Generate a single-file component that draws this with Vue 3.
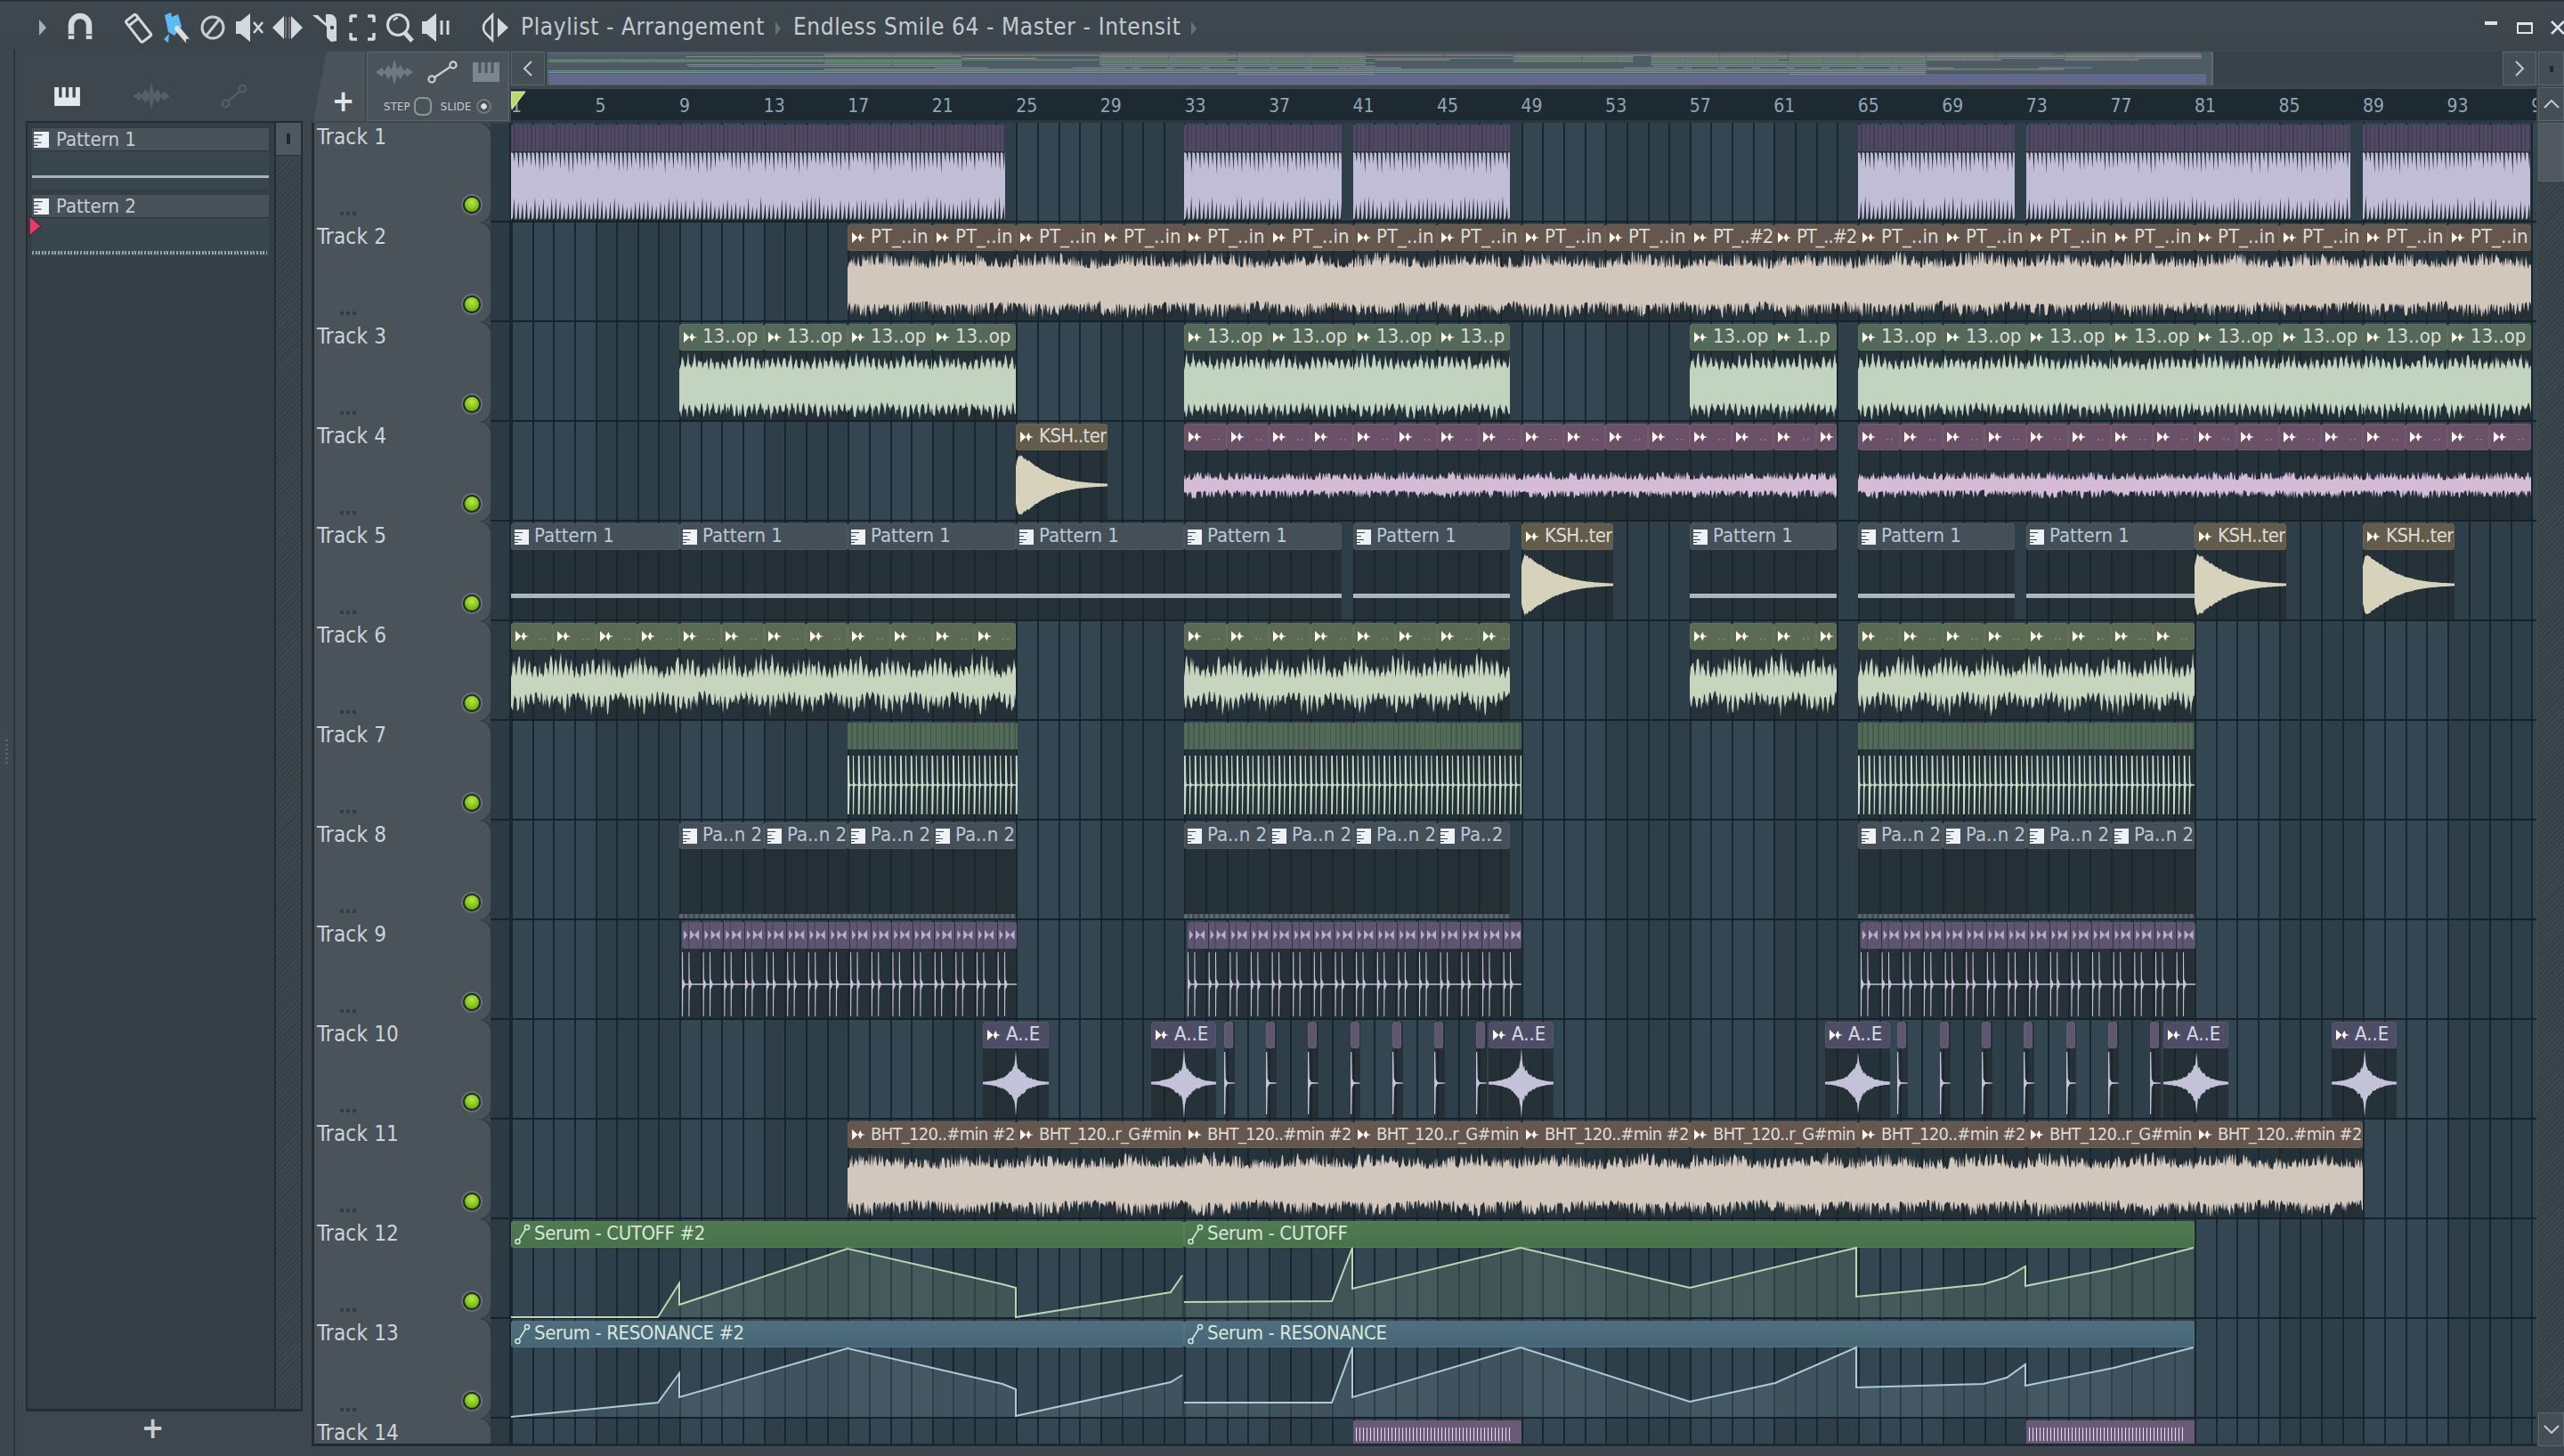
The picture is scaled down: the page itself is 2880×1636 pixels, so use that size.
<script setup>
const BAR = 23.64
const bx = (n) => (n - 1) * BAR

function rng(seed) {
  let s = seed
  return () => {
    s = (s * 16807) % 2147483647
    return s / 2147483647
  }
}

// Wave builders: coordinates are relative to the track row (112 high)
function edgePath(top, bottom) {
  const up = top.map((p) => `${p[0].toFixed(1)} ${p[1].toFixed(1)}`)
  const down = bottom.reverse().map((p) => `${p[0].toFixed(1)} ${p[1].toFixed(1)}`)
  return `M${up.join('L')}L${down.join('L')}Z`
}

function noiseWave(w, seed, c, base, spike, wobble, period, depth) {
  const r = rng(seed)
  const top = []
  const bottom = []
  const sample = (x) => {
    const env = 1 - depth + depth * Math.sin(x / wobble)
    const shape = period ? Math.abs(Math.sin(x / period)) * (0.3 + 0.7 * r()) : Math.pow(r(), 1.6)
    return env * (base + (spike - base) * shape)
  }
  for (let x = 0; x <= w; x += 1) {
    top.push([x, c - sample(x)])
    bottom.push([x, c + sample(x + 1.5)])
  }
  return edgePath(top, bottom)
}

function combWave(w, seed) {
  const r = rng(seed)
  const p = 4.7
  const top = []
  const bottom = []
  for (let x = 0; x < w; x += p) {
    top.push([x, 33], [x + p * 0.55, 34], [x + p * 0.85, 44 + r() * 14])
    bottom.push([x, 109], [x + p * 0.4, 107], [x + p * 0.75, 82 + r() * 12])
  }
  top.push([w, 36])
  bottom.push([w, 106])
  return edgePath(top, bottom)
}

function decayWave(w, seed) {
  const r = rng(seed)
  const top = []
  const bottom = []
  for (let x = 0; x <= w; x += 1) {
    const rise = Math.min(1, 0.6 + x / 8)
    const a = 35 * rise * Math.exp(-Math.pow(x / 36, 1.3)) * (0.95 + r() * 0.1) + 0.8
    top.push([x, 71 - a])
    bottom.push([x, 71 + a])
  }
  return edgePath(top, bottom)
}

function starWave(w, seed) {
  const r = rng(seed)
  const mid = 37
  const top = []
  const bottom = []
  for (let x = 0; x <= w; x += 1) {
    const d = Math.abs(x - mid)
    const a = 15 * Math.exp(-d / 0.8) + 22 * Math.exp(-d / 11) * (0.78 + r() * 0.36) + 0.7
    top.push([x, 71 - a])
    bottom.push([x, 71 + a])
  }
  return edgePath(top, bottom)
}

function spikeWave(w) {
  return `M0 36L1.2 36L1.8 66L4 70L${w} 70.4L${w} 71.6L4 72L1.8 76L1.2 106L0 106Z`
}

function pulseWave(w, period, c) {
  let d = `M0 ${c - 0.7}H${w}V${c + 0.7}H0Z`
  for (let x = 0, i = 0; x < w - 1; x += period, i++) {
    const t = i % 2 ? 1.1 : 1.8
    d += `M${x.toFixed(1)} ${c - 33}L${(x + t).toFixed(1)} ${c - 33}L${(x + t + 0.6).toFixed(1)} ${c - 3}L${(x + 3.4).toFixed(1)} ${c}L${(x + t + 0.6).toFixed(1)} ${c + 3}L${(x + t).toFixed(1)} ${c + 33}L${x.toFixed(1)} ${c + 33}Z`
  }
  return d
}

function pairWave(w) {
  let d = 'M0 71.3H' + w + 'V72.7H0Z'
  for (let x = 0; x < w - 1; x += BAR) {
    for (const off of [0, 7.4]) {
      const o = x + off
      d += `M${o.toFixed(1)} 36L${(o + 1).toFixed(1)} 36L${(o + 1.3).toFixed(1)} 66L${(o + 4).toFixed(1)} 72L${(o + 1.3).toFixed(1)} 78L${(o + 1).toFixed(1)} 108L${o.toFixed(1)} 108Z`
    }
  }
  return d
}

function pairMarks(w) {
  let d = ''
  for (let x = 0; x < w - 4; x += BAR) {
    const o = x.toFixed(1)
    d += `M${+o + 3} 10V21L${+o + 7} 15.5ZM${+o + 10} 10L${+o + 15} 15.5L${+o + 10} 21ZM${+o + 15} 15.5L${+o + 20} 10V21Z`
  }
  return d
}

const waveMakers = {
  comb: combWave,
  tan: (w, s) => noiseWave(w, s, 70, 21, 38, 22, 0, 0.08),
  green: (w, s) => noiseWave(w, s, 72, 19, 39, 9, 2.1, 0.05),
  thin: (w, s) => noiseWave(w, s, 71, 6, 16, 14, 0, 0.08),
  olive: (w, s) => noiseWave(w, s, 71, 9, 38, 6, 1.9, 0.18),
  beige: (w, s) => noiseWave(w, s, 73, 20, 37, 18, 0, 0.08),
  decay: decayWave,
  star: starWave,
  spike: spikeWave,
  pulse: (w) => pulseWave(w, 5.9, 72),
  pair: pairWave
}

let seedCounter = 11
function clip(start, end, kind, opts = {}) {
  const left = Math.round(bx(start))
  const width = Math.round(bx(end)) - left
  const wave = opts.wave ? waveMakers[opts.wave](width, (seedCounter += 97)) : ''
  return { start, end, kind, left, width, wave, label: opts.label || '', icon: opts.icon || '', dim: !!opts.dim, tight: !!opts.tight, marks: opts.wave === 'pair' ? pairMarks(width) : '' }
}

function series(from, to, step, make) {
  const out = []
  for (let b = from; b < to; b += step) out.push(make(b, Math.min(b + step, to)))
  return out
}

const ptClip = (b, e) => (b === 57 || b === 61
  ? clip(b, e, 'tan', { wave: 'tan', icon: 'audio', label: 'PT_..#2', tight: true })
  : clip(b, e, 'tan', { wave: 'tan', icon: 'audio', label: 'PT_..in' }))
const greenClip = (b, e, label = '13..op') => clip(b, e, 'green', { wave: 'green', icon: 'audio', label })
const pinkClip = (b, e) => clip(b, e, 'pink', { wave: 'thin', icon: 'audio', label: '..', dim: true })
const oliveClip = (b, e) => clip(b, e, 'olive', { wave: 'olive', icon: 'audio', label: '..', dim: true })
const kshClip = (b) => clip(b, b + 4.36, 'ksh', { wave: 'decay', icon: 'audio', label: 'KSH..ter' })
const pat1 = (b, e) => clip(b, e, 'pattern', { icon: 'pattern', label: 'Pattern 1' })
const pat2 = (b, e = b + 4, label = 'Pa..n 2') => clip(b, e, 'pattern pattern-two', { icon: 'pattern', label })
const dkGreen = (b, e) => clip(b, e, 'dkgreen', { wave: 'pulse' })
const kick = (b, e) => clip(b, e, 'lav', { wave: 'comb' })
const hat = (b, e) => clip(b, e, 'pair', { wave: 'pair' })
const aeClip = (b) => clip(b, b + 3.1, 'ae', { wave: 'star', icon: 'audio', label: 'A..E' })
const aeRun = (from) => series(0, 7, 1, (i) => clip(from + i * 2, from + i * 2 + 0.5, 'ae-small', { wave: 'spike' }))
const bhtLabels = ['BHT_120..#min #2', 'BHT_120..r_G#min']

const tracks = [
  { name: 'Track 1', clips: [kick(1, 24.46), kick(33, 40.46), kick(41, 48.46), kick(65, 72.46), kick(73, 88.4), kick(89, 96.94)] },
  { name: 'Track 2', clips: series(17, 97, 4, ptClip) },
  {
    name: 'Track 3',
    clips: [
      ...series(9, 25, 4, (b, e) => greenClip(b, e)),
      ...series(33, 45, 4, (b, e) => greenClip(b, e)),
      greenClip(45, 48.46, '13..p'),
      greenClip(57, 61),
      greenClip(61, 64, '1..p'),
      ...series(65, 97, 4, (b, e) => greenClip(b, e))
    ]
  },
  { name: 'Track 4', clips: [kshClip(25), ...series(33, 64, 2, pinkClip), ...series(65, 97, 2, pinkClip)] },
  {
    name: 'Track 5',
    clips: [pat1(1, 9), pat1(9, 17), pat1(17, 25), pat1(25, 33), pat1(33, 40.46), pat1(41, 48.46), kshClip(49), pat1(57, 64), pat1(65, 72.46), pat1(73, 81), kshClip(81), kshClip(89)]
  },
  { name: 'Track 6', clips: [...series(1, 25, 2, oliveClip), ...series(33, 48.46, 2, oliveClip), ...series(57, 64, 2, oliveClip), ...series(65, 81, 2, oliveClip)] },
  { name: 'Track 7', clips: [dkGreen(17, 25.05), dkGreen(33, 49), dkGreen(65, 81)] },
  {
    name: 'Track 8',
    clips: [pat2(9), pat2(13), pat2(17), pat2(21), pat2(33), pat2(37), pat2(41), pat2(45, 48.46, 'Pa..2'), pat2(65), pat2(69), pat2(73), pat2(77)]
  },
  { name: 'Track 9', clips: [hat(9.13, 25.03), hat(33.13, 49.03), hat(65.13, 81.03)] },
  { name: 'Track 10', clips: [aeClip(23.43), aeClip(31.41), ...aeRun(34.87), aeClip(47.43), aeClip(63.42), ...aeRun(66.88), aeClip(79.5), aeClip(87.5)] },
  { name: 'Track 11', clips: series(17, 89, 8, (b, e) => clip(b, e, 'tan beige', { wave: 'beige', icon: 'audio', label: bhtLabels[((b - 17) / 8) % 2] })) },
  {
    name: 'Track 12',
    clips: [clip(1, 33, 'auto-green', { icon: 'auto', label: 'Serum - CUTOFF #2' }), clip(33, 81, 'auto-green', { icon: 'auto', label: 'Serum - CUTOFF' })],
    curve: { tone: 'curve-green', parts: [
      [[0, 110], [165, 110], [189, 72], [189, 96], [378, 33], [552, 73], [567, 77], [567, 110], [741, 82], [754, 63]],
      [[756, 93], [922, 92], [945, 32], [945, 78], [1134, 32], [1324, 77], [1511, 32], [1511, 87], [1654, 73], [1680, 65], [1701, 53], [1701, 75], [1800, 55], [1890, 32]]
    ] }
  },
  {
    name: 'Track 13',
    clips: [clip(1, 33, 'auto-blue', { icon: 'auto', label: 'Serum - RESONANCE #2' }), clip(33, 81, 'auto-blue', { icon: 'auto', label: 'Serum - RESONANCE' })],
    curve: { tone: 'curve-blue', parts: [
      [[0, 110], [165, 94], [189, 61], [189, 88], [378, 33], [552, 73], [567, 79], [567, 109], [741, 71], [754, 63]],
      [[756, 94], [922, 94], [945, 32], [945, 88], [1134, 32], [1324, 93], [1420, 72], [1511, 32], [1511, 77], [1654, 73], [1680, 66], [1701, 51], [1701, 75], [1800, 55], [1890, 32]]
    ] }
  },
  { name: 'Track 14', clips: [clip(41, 49, 'purple-run'), clip(73, 81, 'purple-run')] }
]

function curveLine(points) {
  return 'M' + points.map((p) => p.join(' ')).join('L')
}
function curveFill(points) {
  const first = points[0]
  const last = points[points.length - 1]
  return `M${first[0]} 110L` + points.map((p) => p.join(' ')).join('L') + `L${last[0]} 110Z`
}

const rulerMarks = []
for (let n = 1; n <= 97; n += 4) rulerMarks.push(n)

const overviewColors = {
  lav: '#6f6a8c',
  tan: '#ab9580',
  green: '#86ad88',
  pink: '#9a7c9c',
  ksh: '#a8a078',
  pattern: '#7d9a88',
  olive: '#7fa878',
  dkgreen: '#6ea070',
  pair: '#8f86b4',
  ae: '#8f8ab0',
  'ae-small': '#8f8ab0',
  'auto-green': '#72b088',
  'auto-blue': '#7aa4b4',
  'purple-run': '#9a84ac'
}
const overviewBars = []
tracks.forEach((track, i) => {
  track.clips.forEach((c) => {
    const key = c.kind.split(' ')[0]
    overviewBars.push({
      x: 2 + (c.start - 1) * 19.35,
      w: (c.end - c.start) * 19.35 - 0.6,
      y: 1.6 + i * 1.78,
      fill: overviewColors[key] || '#889'
    })
  })
})
const overviewStripes = [25.5, 27.5, 29.5, 31.5, 33.5, 35.5]
</script>

<template>
  <div class="app">
    <header class="topbar">
      <svg class="tool tool-play" viewBox="0 0 42 42"><path d="M17 12L25 21L17 30Z" fill="#a6afb5" /></svg>
      <svg class="tool" viewBox="0 0 42 42">
        <path d="M11 34V18a10 10 0 0 1 20 0V34" fill="none" stroke="#d4d9dd" stroke-width="6.5" />
        <path d="M8 29h6M28 29h6" stroke="#3e474e" stroke-width="1.5" />
      </svg>
      <svg class="tool tool-gap" viewBox="0 0 42 42">
        <g transform="rotate(-38 21 21)" fill="none" stroke="#d4d9dd" stroke-width="3">
          <rect x="14" y="7" width="14" height="30" rx="2" />
          <path d="M14 13H28" />
        </g>
      </svg>
      <svg class="tool" viewBox="0 0 42 42">
        <path d="M9 7L16 4L17 9L24 6L28 20L20 30L13 26Z" fill="#5cbcf2" />
        <path d="M23 22L34 35" stroke="#d8dde0" stroke-width="6" stroke-linecap="round" />
        <circle cx="35" cy="36" r="2.4" fill="#3e474e" />
        <path d="M8 34L14 28L13 38Z" fill="#5cbcf2" />
      </svg>
      <svg class="tool" viewBox="0 0 42 42">
        <circle cx="21" cy="21" r="12" fill="none" stroke="#c9ced2" stroke-width="3" />
        <path d="M13 31L29 11" stroke="#c9ced2" stroke-width="3" />
      </svg>
      <svg class="tool" viewBox="0 0 42 42">
        <path d="M5 14H10L21 5V37L10 28H5Z" fill="#d4d9dd" />
        <path d="M25 15L35 27M35 15L25 27" stroke="#d4d9dd" stroke-width="2.6" />
      </svg>
      <svg class="tool" viewBox="0 0 42 42">
        <path d="M4 21L17 8V34Z" fill="#d4d9dd" />
        <path d="M38 21L25 8V34Z" fill="#d4d9dd" />
        <path d="M19 9V33M23 9V33" stroke="#8a7f86" stroke-width="1.4" />
      </svg>
      <svg class="tool" viewBox="0 0 42 42">
        <path d="M7 7L13 7L22 16V6H28Q34 8 34 15V36L28 37L23 32V20Z" fill="#d4d9dd" />
        <circle cx="29" cy="21" r="2.2" fill="#3e474e" />
      </svg>
      <svg class="tool" viewBox="0 0 42 42">
        <path d="M15 8H9Q8 8 8 9V15M27 8H33Q34 8 34 9V15M15 34H9Q8 34 8 33V27M27 34H33Q34 34 34 33V27" fill="none" stroke="#d4d9dd" stroke-width="3.4" />
      </svg>
      <svg class="tool" viewBox="0 0 42 42">
        <circle cx="19" cy="18" r="11.5" fill="none" stroke="#d4d9dd" stroke-width="3" />
        <path d="M14 13Q16 10 19 10" fill="none" stroke="#d4d9dd" stroke-width="2" />
        <path d="M27 27L35 36" stroke="#d4d9dd" stroke-width="5" />
      </svg>
      <svg class="tool" viewBox="0 0 42 42">
        <path d="M4 14H9L20 5V37L9 28H4Z" fill="#d4d9dd" />
        <path d="M26 13V29M33 13V29" stroke="#d4d9dd" stroke-width="3" />
      </svg>
      <svg class="tool tool-gap" viewBox="0 0 42 42">
        <path d="M18 7V35L10 27Q6 21 10 15Z" fill="none" stroke="#d4d9dd" stroke-width="2.6" />
        <path d="M24 10L36 21L24 32Z" fill="#d4d9dd" />
      </svg>
      <span class="title">Playlist - Arrangement</span>
      <span class="title-sep"></span>
      <span class="title">Endless Smile 64 - Master - Intensit</span>
      <span class="title-sep"></span>
      <div class="win-buttons">
        <span class="win-min"></span>
        <span class="win-max"></span>
        <svg class="win-close" viewBox="0 0 16 16"><path d="M1 1L15 15M15 1L1 15" stroke="#dfe3e6" stroke-width="2.6" /></svg>
      </div>
    </header>

    <div class="main">
      <aside class="dock"><span class="dock-grip"></span></aside>

      <section class="picker">
        <div class="picker-tabs">
          <svg class="tab-icon" viewBox="0 0 32 24">
            <path d="M1 1H31V23H1Z" fill="#e3e8ec" />
            <path d="M8 1V13M16 1V13M24 1V13" stroke="#3f484f" stroke-width="3.6" />
          </svg>
          <svg class="tab-icon tab-wave" viewBox="0 0 42 30">
            <path d="M0 15L7 10L10 14L14 7L18 12L21 0L24 12L28 7L32 14L35 10L42 15L35 20L32 16L28 23L24 18L21 30L18 18L14 23L10 16L7 20Z" fill="#565f66" />
          </svg>
          <svg class="tab-icon tab-auto" viewBox="0 0 32 30">
            <circle cx="6" cy="24" r="4" fill="none" stroke="#565f66" stroke-width="2.4" />
            <circle cx="26" cy="6" r="4" fill="none" stroke="#565f66" stroke-width="2.4" />
            <path d="M9 21L23 9" stroke="#565f66" stroke-width="2.4" />
          </svg>
        </div>
        <div class="picker-list">
          <div class="picker-rows">
            <div class="pat">
              <div class="pat-head">
                <svg class="pat-icon" viewBox="0 0 16 17"><path d="M0 0H16V17H0Z" fill="#eef2f5" /><path d="M0 3.5H9M0 7.5H5M0 11.5H8M0 14.5H4" stroke="#3d4850" stroke-width="1.2" /></svg>
                <span>Pattern 1</span>
              </div>
              <div class="pat-body"><i class="pat-solid"></i></div>
            </div>
            <div class="pat">
              <div class="pat-head">
                <svg class="pat-icon" viewBox="0 0 16 17"><path d="M0 0H16V17H0Z" fill="#eef2f5" /><path d="M0 3.5H9M0 7.5H5M0 11.5H8M0 14.5H4" stroke="#3d4850" stroke-width="1.2" /></svg>
                <span>Pattern 2</span>
              </div>
              <div class="pat-body"><i class="pat-dotted"></i></div>
              <svg class="pat-marker" viewBox="0 0 15 24"><path d="M1 1L14 12L1 23Z" fill="#e8395f" stroke="#1d262c" stroke-width="1" /></svg>
            </div>
          </div>
          <div class="picker-scroll"><span class="picker-scroll-btn"><i></i></span></div>
        </div>
        <div class="picker-add">+</div>
      </section>

      <section class="playlist">
        <div class="pl-head">
          <div class="add-tab">+</div>
          <div class="snap">
            <div class="snap-icons">
              <svg class="snap-wave" viewBox="0 0 42 30">
                <path d="M0 15L7 10L10 14L14 7L18 12L21 0L24 12L28 7L32 14L35 10L42 15L35 20L32 16L28 23L24 18L21 30L18 18L14 23L10 16L7 20Z" fill="#6f797f" />
              </svg>
              <svg class="snap-auto" viewBox="0 0 34 26">
                <circle cx="5" cy="21" r="3.6" fill="none" stroke="#c9cfd4" stroke-width="2.2" />
                <circle cx="29" cy="5" r="3.6" fill="none" stroke="#c9cfd4" stroke-width="2.2" />
                <path d="M8 19L26 7" stroke="#c9cfd4" stroke-width="2.2" />
              </svg>
              <svg class="snap-piano" viewBox="0 0 30 22">
                <path d="M0 0H30V22H0Z" fill="#7c868c" />
                <path d="M8 0V12M15 0V12M22 0V12" stroke="#4b555c" stroke-width="3" />
              </svg>
            </div>
            <div class="snap-row">
              <span>STEP</span><i class="snap-toggle"></i>
              <span class="snap-slide">SLIDE</span><i class="snap-radio"></i>
            </div>
          </div>
          <div class="nav">
            <div class="overview-row">
              <button class="nav-btn">
                <svg viewBox="0 0 12 20" width="12" height="20"><path d="M10 2L2 10L10 18" fill="none" stroke="#c3cad0" stroke-width="2" /></svg>
              </button>
              <div class="overview-track">
                <svg class="overview" viewBox="0 0 1870 38" preserveAspectRatio="none">
                  <rect width="1870" height="38" fill="#4c5d65" />
                  <rect v-for="y in overviewStripes" :key="y" x="2" :y="y" width="1862" height="1.2" :fill="y > 30 ? '#7a6f9e' : '#6d74a8'" />
                  <rect v-for="(b, i) in overviewBars" :key="i" :x="b.x" :y="b.y" :width="b.w" height="1.1" :fill="b.fill" opacity="0.8" />
                </svg>
              </div>
              <button class="nav-btn nav-btn-right">
                <svg viewBox="0 0 12 20" width="12" height="20"><path d="M2 2L10 10L2 18" fill="none" stroke="#c3cad0" stroke-width="2" /></svg>
              </button>
            </div>
            <div class="ruler">
              <span v-for="n in rulerMarks" :key="n" class="ruler-mark">{{ n }}</span>
              <svg class="ruler-play" viewBox="0 0 18 22"><path d="M0 1H17L1 22Z" fill="#b9d96a" stroke="#e9f3c4" stroke-width="1" /></svg>
            </div>
          </div>
          <div class="vscroll-top">
            <span class="vs-btn"><i></i></span>
            <span class="vs-btn vs-up">
              <svg viewBox="0 0 18 10" width="18" height="10"><path d="M1 9L9 1L17 9" fill="none" stroke="#c3cad0" stroke-width="2" /></svg>
            </span>
          </div>
        </div>

        <div class="pl-body">
          <div class="rows">
            <div v-for="track in tracks" :key="track.name" class="row">
              <div class="row-head">
                <span class="row-name">{{ track.name }}</span>
                <span class="row-dots"><i></i><i></i><i></i></span>
                <span class="row-led"></span>
              </div>
              <div class="row-strip"></div>
              <div class="lane">
                <div
                  v-for="(c, i) in track.clips"
                  :key="i"
                  class="clip"
                  :class="c.kind"
                  :style="{ left: c.left + 'px', width: c.width + 'px' }"
                >
                  <div class="clip-head">
                    <svg v-if="c.icon === 'audio'" class="clip-icon" viewBox="0 0 15 12">
                      <path d="M0 0L6.5 6L0 12ZM6.5 6L9.5 1L11 5L15 6L11 7L9.5 11Z" />
                    </svg>
                    <svg v-else-if="c.icon === 'pattern'" class="clip-icon-pat" viewBox="0 0 16 17">
                      <path d="M0 0H16V17H0Z" fill="#eef2f5" />
                      <path d="M0 3.5H9M0 7.5H5M0 11.5H8M0 14.5H4" stroke="#3d4850" stroke-width="1.2" />
                    </svg>
                    <svg v-else-if="c.icon === 'auto'" class="clip-icon-auto" viewBox="0 0 18 24">
                      <circle cx="3.5" cy="20" r="2.6" fill="none" stroke="#dbe8e0" stroke-width="1.5" />
                      <circle cx="14" cy="4" r="2.6" fill="none" stroke="#dbe8e0" stroke-width="1.5" />
                      <path d="M5 18L12.5 6" stroke="#dbe8e0" stroke-width="1.5" />
                    </svg>
                    <span v-if="c.label" class="clip-label" :class="{ 'clip-label-dim': c.dim, 'clip-label-tight': c.tight }">{{ c.label }}</span>
                    <i v-if="c.kind === 'purple-run'" class="clip-ticks"></i>
                    <svg v-if="c.marks" class="clip-marks" :viewBox="`0 0 ${c.width} 30`" :width="c.width" height="30">
                      <path :d="c.marks" />
                    </svg>
                  </div>
                  <svg v-if="c.wave" class="clip-wave" :viewBox="`0 0 ${c.width} 112`" :width="c.width" height="112">
                    <path :d="c.wave" />
                  </svg>
                  <i v-if="c.kind === 'pattern'" class="note-line"></i>
                  <i v-if="c.kind === 'pattern pattern-two'" class="dot-line"></i>
                </div>

                <svg v-if="track.curve" class="curve" :class="track.curve.tone" viewBox="0 0 2275 112" width="2275" height="112">
                  <g v-for="(part, i) in track.curve.parts" :key="i">
                    <path class="curve-fill" :d="curveFill(part)" />
                    <path class="curve-line" :d="curveLine(part)" />
                  </g>
                </svg>
              </div>
            </div>
          </div>
          <div class="vscroll">
            <span class="vs-thumb"></span>
            <span class="vs-hatch"></span>
            <span class="vs-btn vs-down">
              <svg viewBox="0 0 18 10" width="18" height="10"><path d="M1 1L9 9L17 1" fill="none" stroke="#c3cad0" stroke-width="2" /></svg>
            </span>
          </div>
        </div>
      </section>
    </div>
  </div>
</template>

<style>
html,
body {
  margin: 0;
  background: #3e474e;
}
</style>

<style scoped>
.app {
  width: 2880px;
  height: 1636px;
  display: flex;
  flex-direction: column;
  overflow: hidden;
  background: #3e474e;
  color: #c8d0d6;
  font-family: "DejaVu Sans Condensed", "DejaVu Sans", sans-serif;
  font-stretch: condensed;
}

.topbar {
  height: 56px;
  flex: none;
  box-sizing: border-box;
  padding: 4px 0 0 27px;
  display: flex;
  align-items: center;
  border-top: 2px solid #2b343a;
  background: linear-gradient(#3f484f, #3c454c);
}
.tool {
  width: 42px;
  height: 42px;
  flex: none;
}
.tool-gap {
  margin-left: 23px;
}
.title {
  font-size: 26px;
  line-height: 38px;
  color: #c3cbd1;
  white-space: nowrap;
  margin: -2px 0 0 8px;
  letter-spacing: 0.6px;
}
.title-sep {
  width: 0;
  height: 0;
  margin: 2px 14px 0 12px;
  border-left: 6px solid #667078;
  border-top: 8px solid transparent;
  border-bottom: 8px solid transparent;
}
.title-sep + .title {
  margin-left: 0;
}
.win-buttons {
  margin-left: auto;
  display: flex;
  align-items: center;
  height: 42px;
  margin-right: -1px;
}
.win-min {
  width: 14px;
  height: 4px;
  background: #dfe3e6;
  margin: -10px 22px 0 0;
}
.win-max {
  width: 18px;
  height: 13px;
  border: 2px solid #dfe3e6;
  border-top-width: 3px;
  box-sizing: border-box;
  margin-right: 20px;
}
.win-close {
  width: 16px;
  height: 16px;
  flex: none;
}

.main {
  flex: 1;
  min-height: 0;
  display: flex;
}

.dock {
  width: 15px;
  flex: none;
  border-right: 2px solid #2c353c;
  display: flex;
  align-items: center;
}
.dock-grip {
  width: 3px;
  height: 30px;
  margin-left: 6px;
  background: repeating-linear-gradient(#5a636a 0 2px, transparent 2px 5px);
}

.picker {
  width: 333px;
  flex: none;
  display: flex;
  flex-direction: column;
}
.picker-tabs {
  height: 80px;
  flex: none;
  display: flex;
  align-items: center;
  box-sizing: border-box;
  padding: 24px 0 0 43px;
}
.tab-icon {
  width: 31px;
  height: 23px;
  flex: none;
}
.tab-wave {
  width: 42px;
  height: 30px;
  margin-left: 58px;
}
.tab-auto {
  width: 32px;
  height: 28px;
  margin-left: 56px;
}
.picker-list {
  flex: 1;
  min-height: 0;
  margin: 0 10px 0 12px;
  display: flex;
  background: #333e46;
  border: 2px solid #222c33;
  border-bottom-width: 3px;
}
.picker-rows {
  flex: 1;
  min-width: 0;
  padding: 6px 6px 0 5px;
  border-right: 2px solid #222c33;
}
.pat {
  position: relative;
  margin-bottom: 6px;
}
.pat-head {
  height: 25px;
  display: flex;
  align-items: center;
  gap: 8px;
  padding-left: 2px;
  background: #4a5259;
  font-size: 22px;
  color: #c4cdd4;
  border-bottom: 1px solid #2b353c;
}
.pat-icon {
  width: 17px;
  height: 18px;
  flex: none;
}
.pat-body {
  height: 43px;
  background: #3a464e;
  position: relative;
}
.pat-solid {
  position: absolute;
  left: 0;
  right: 0;
  top: 27px;
  height: 3px;
  background: #a9b4ba;
}
.pat-dotted {
  position: absolute;
  left: 0;
  right: 2px;
  top: 37px;
  height: 4px;
  background: repeating-linear-gradient(90deg, #98a3a9 0 2px, transparent 2px 3.6px);
}
.pat-marker {
  position: absolute;
  left: -4px;
  top: 23px;
  width: 15px;
  height: 24px;
}
.picker-scroll {
  width: 28px;
  flex: none;
  background: repeating-linear-gradient(135deg, #3d474e 0 2px, #353f46 2px 4px);
}
.picker-scroll-btn {
  display: flex;
  align-items: center;
  justify-content: center;
  height: 36px;
  background: #4f585f;
  border-bottom: 1px solid #2b353c;
}
.picker-scroll-btn i {
  width: 4px;
  height: 12px;
  background: #1e282e;
}
.picker-add {
  height: 50px;
  flex: none;
  display: flex;
  align-items: center;
  justify-content: center;
  font-size: 34px;
  font-weight: 700;
  color: #c8cdd1;
  padding: 0 24px 14px 0;
  box-sizing: border-box;
}

.playlist {
  flex: 1;
  min-width: 0;
  display: flex;
  flex-direction: column;
  padding-bottom: 11px;
}
.pl-head {
  height: 82px;
  flex: none;
  display: flex;
  padding-left: 3px;
}
.add-tab {
  width: 57px;
  flex: none;
  height: 78px;
  margin-top: 2px;
  background: #4a535a;
  clip-path: polygon(24% 0, 100% 0, 100% 100%, 0 100%, 0 92%);
  border-radius: 8px 0 0 0;
  display: flex;
  align-items: flex-end;
  justify-content: center;
  font-size: 34px;
  font-weight: 700;
  line-height: 46px;
  color: #e0e4e7;
  box-sizing: border-box;
  padding-left: 8px;
}
.snap {
  width: 160px;
  height: 78px;
  flex: none;
  margin: 2px 2px 0 2px;
  box-sizing: border-box;
  background: #4a535a;
  border: 1px solid #5b656c;
  display: flex;
  flex-direction: column;
}
.snap-icons {
  height: 44px;
  display: flex;
  align-items: center;
  padding-left: 9px;
}
.snap-wave {
  width: 42px;
  height: 30px;
  flex: none;
}
.snap-auto {
  width: 34px;
  height: 26px;
  flex: none;
  margin-left: 16px;
}
.snap-piano {
  width: 30px;
  height: 22px;
  flex: none;
  margin-left: 17px;
}
.snap-row {
  flex: 1;
  display: flex;
  align-items: center;
  padding-left: 18px;
  font-size: 13px;
  color: #c4cbd0;
  letter-spacing: 0.2px;
  line-height: 1;
}
.snap-toggle {
  width: 20px;
  height: 21px;
  margin-left: 4px;
  border: 2px solid #8c959b;
  border-radius: 7px;
  box-sizing: border-box;
}
.snap-slide {
  margin-left: 10px;
}
.snap-radio {
  width: 17px;
  height: 17px;
  margin-left: 5px;
  box-sizing: border-box;
  border-radius: 50%;
  border: 2px solid #6f797f;
  background: radial-gradient(circle, #d8dde0 0 3px, transparent 3.5px);
}
.nav {
  flex: 1;
  min-width: 0;
  display: flex;
  flex-direction: column;
}
.overview-row {
  height: 38px;
  margin-top: 2px;
  display: flex;
  background: #384249;
}
.nav-btn {
  width: 38px;
  flex: none;
  padding: 0;
  background: #454e55;
  border: 1px solid #5b656c;
  display: flex;
  align-items: center;
  justify-content: center;
}
.overview-track {
  flex: 1;
  min-width: 0;
  padding-left: 2px;
}
.overview {
  display: block;
  width: 1870px;
  height: 38px;
  border-right: 2px solid #5a6b73;
}
.ruler {
  position: relative;
  height: 35px;
  margin-top: 4px;
  background: #1e2a32;
  display: flex;
  overflow: hidden;
  border-bottom: 3px solid #2a3740;
}
.ruler-mark {
  width: 94.56px;
  flex: none;
  font-size: 21px;
  line-height: 38px;
  color: #93a5b4;
}
.ruler-play {
  position: absolute;
  left: 0;
  top: 2px;
  width: 17px;
  height: 21px;
}
.vscroll-top {
  width: 29px;
  flex: none;
  margin-left: 2px;
  display: flex;
  flex-direction: column;
  gap: 2px;
  padding-top: 2px;
}
.vs-btn {
  flex: none;
  display: flex;
  align-items: center;
  justify-content: center;
  height: 38px;
  background: #454e55;
  border: 1px solid #5b656c;
  box-sizing: border-box;
}
.vs-btn i {
  width: 4px;
  height: 7px;
  background: #1e282e;
}

.pl-body {
  flex: 1;
  min-height: 0;
  display: flex;
}
.rows {
  flex: 1;
  min-width: 0;
  overflow: hidden;
  border-left: 3px solid #222c33;
  border-bottom: 3px solid #1e2a32;
}
.row {
  height: 112px;
  display: flex;
}
.row-head {
  width: 198px;
  flex: none;
  position: relative;
  box-sizing: border-box;
  padding: 2px 0 0 3px;
  background: #4a535a;
  border-radius: 0 14px 14px 0;
  box-shadow: 2px 0 0 #2c3a43;
}
.row-name {
  display: block;
  font-size: 24px;
  line-height: 28px;
  color: #ccd4da;
  letter-spacing: 0.2px;
}
.row-dots {
  position: absolute;
  left: 29px;
  bottom: 8px;
  display: flex;
  gap: 3px;
}
.row-dots i {
  width: 4px;
  height: 4px;
  background: #343c43;
}
.row-led {
  position: absolute;
  left: 167px;
  top: 82px;
  width: 20px;
  height: 20px;
  box-sizing: border-box;
  border-radius: 50%;
  background: radial-gradient(circle at 50% 35%, #b6ea45 0, #8ccb1f 45%, #5b8e0c 100%);
  border: 2px solid #1e2b20;
  box-shadow: 0 0 0 2px #666f75;
}
.row-strip {
  width: 23px;
  flex: none;
  background: #2c3a43;
  border-right: 2px solid #1a2730;
  box-sizing: border-box;
  box-shadow: inset 0 -2px #16222a;
}
.lane {
  flex: 1;
  min-width: 0;
  position: relative;
  background:
    linear-gradient(#16222a, #16222a) bottom / 100% 2px no-repeat,
    repeating-linear-gradient(90deg, #18262f 0 2px, transparent 2px 23.64px),
    repeating-linear-gradient(90deg, #334651 0 94.56px, #2e3f4a 94.56px 189.12px);
}

.clip {
  position: absolute;
  top: 2px;
  height: 108px;
  background: rgba(30, 36, 42, 0.6);
  overflow: hidden;
}
.clip-head {
  position: relative;
  height: 30px;
  display: flex;
  align-items: center;
  box-sizing: border-box;
  padding-left: 3px;
  border-radius: 3px;
  border: 1px solid rgba(255, 255, 255, 0.05);
  overflow: hidden;
  white-space: nowrap;
}
.clip-icon {
  width: 15px;
  height: 12px;
  flex: none;
  margin: 0 6px 0 1px;
  fill: #fff6ea;
}
.clip-icon-pat {
  width: 16px;
  height: 17px;
  flex: none;
  margin-right: 6px;
}
.clip-icon-auto {
  width: 18px;
  height: 24px;
  flex: none;
  margin-right: 4px;
}
.clip-label {
  font-size: 22px;
  line-height: 28px;
  margin-top: -2px;
  color: #dcdcd6;
}
.clip-label-dim {
  color: #7f8a78;
  margin-left: auto;
  padding-right: 6px;
  font-size: 16px;
}
.clip-label-tight {
  letter-spacing: -1.2px;
}
.clip-wave {
  position: absolute;
  left: 0;
  top: -2px;
}
.clip-marks {
  position: absolute;
  left: -1px;
  top: -1px;
  fill: #b6aecb;
}

.lav .clip-head {
  border: 0;
  border-radius: 0;
  background: repeating-linear-gradient(90deg, #4f4963 0 3.4px, #423d54 3.4px 4.7px);
}
.lav .clip-wave {
  fill: #c1bdd6;
}
.tan .clip-head {
  background: #65564e;
}
.tan .clip-wave {
  fill: #d2c7bc;
}
.beige .clip-label {
  font-size: 20px;
  letter-spacing: -0.7px;
}
.green .clip-head {
  background: #54695a;
}
.green .clip-wave {
  fill: #c2d4bf;
}
.pink .clip-head {
  background: #6b5168;
}
.pink .clip-wave {
  fill: #d5bcd6;
}
.ksh .clip-head {
  background: #635c4c;
}
.ksh .clip-label {
  letter-spacing: -0.6px;
}
.ksh .clip-wave {
  fill: #d6d2bc;
}
.pattern .clip-head {
  background: #454f58;
}
.pattern .clip-label {
  color: #b9c8d6;
}
.olive .clip-head {
  background: #5b6a52;
}
.olive .clip-wave {
  fill: #c7d4be;
}
.dkgreen .clip-head {
  border: 0;
  border-radius: 0;
  background: repeating-linear-gradient(90deg, #53695a 0 4.4px, #445947 4.4px 5.9px);
}
.dkgreen .clip-wave {
  fill: #c5dcc6;
}
.pair .clip-head {
  border: 0;
  background:
    linear-gradient(90deg, transparent 7px, #473f58 7px 8px, transparent 8px) 0 0 / 23.64px 100%,
    repeating-linear-gradient(90deg, #5e5570 0 22.64px, #2a333b 22.64px 23.64px);
}
.pair .clip-wave {
  fill: #c8bfd8;
}
.ae .clip-head {
  background: #4d4e66;
}
.ae .clip-label {
  color: #d4dbe8;
}
.ae .clip-wave {
  fill: #c4c2d8;
}
.ae-small .clip-head {
  width: 10px;
  background: #5f5770;
  padding: 0;
}
.ae-small .clip-wave {
  fill: #c4c2d8;
}
.auto-green,
.auto-blue {
  background: transparent;
}
.auto-green .clip-head {
  background: linear-gradient(#507b52, #487249);
}
.auto-blue .clip-head {
  background: linear-gradient(#4f6f7f, #466575);
}
.auto-green .clip-label,
.auto-blue .clip-label {
  color: #d9e6dc;
  letter-spacing: -0.4px;
}
.purple-run {
  background: #6a5a78;
}
.purple-run .clip-head {
  border: 0;
  background: #6a5a78;
}
.clip-ticks {
  flex: 1;
  height: 15px;
  margin-right: 12px;
  background: repeating-linear-gradient(90deg, #e6def0 0 1.5px, #6a5a78 1.5px 4px);
}

.note-line {
  position: absolute;
  left: 0;
  right: 0;
  top: 79px;
  height: 5px;
  background: #aab5bd;
}
.dot-line {
  position: absolute;
  left: 0;
  right: 0;
  top: 103px;
  height: 5px;
  background: repeating-linear-gradient(90deg, #5b676e 0 3.6px, #414c53 3.6px 5.9px);
}

.curve {
  position: absolute;
  left: 0;
  top: 0;
  pointer-events: none;
}
.curve-fill {
  stroke: none;
}
.curve-line {
  fill: none;
  stroke-width: 2;
}
.curve-green .curve-fill {
  fill: rgba(135, 165, 130, 0.22);
}
.curve-green .curve-line {
  stroke: #b8d8b4;
}
.curve-blue .curve-fill {
  fill: rgba(125, 145, 165, 0.24);
}
.curve-blue .curve-line {
  stroke: #aecada;
}

.vscroll {
  width: 29px;
  flex: none;
  margin-left: 2px;
  display: flex;
  flex-direction: column;
}
.vs-thumb {
  height: 66px;
  flex: none;
  background: #4f585f;
  border: 1px solid #5b656c;
  box-sizing: border-box;
}
.vs-hatch {
  flex: 1;
  background: repeating-linear-gradient(135deg, #3d474e 0 2px, #353f46 2px 4px);
}
</style>
